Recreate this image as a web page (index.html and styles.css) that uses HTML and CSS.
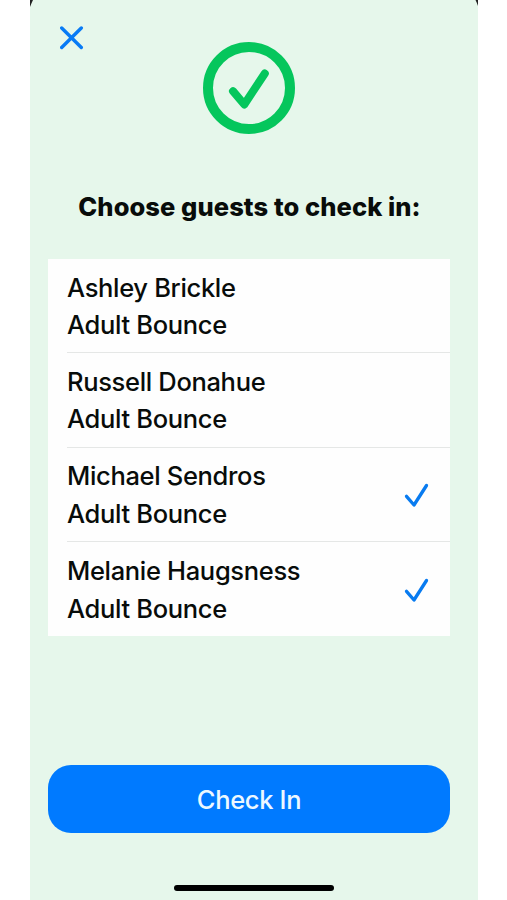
FILE: index.html
```
<!DOCTYPE html>
<html lang="en">
<head>
    <meta charset="UTF-8">
    <meta name="viewport" content="width=device-width, initial-scale=1.0">
    <title>Check In</title>
    <link rel="stylesheet" href="styles.css">
</head>
<body>
    <div class="screen">
        <svg class="corner corner-left" width="4" height="8" viewBox="0 0 4 8"><path d="M0 0H3Q1.500 3 0 7Z"/></svg>
        <svg class="corner corner-right" width="3" height="7" viewBox="0 0 3 7"><path d="M3 0H.5Q2 3 3 6Z"/></svg>

        <button type="button" class="close" aria-label="Close">
            <svg width="24" height="24" viewBox="0 0 24 24"><path d="M1.700 2L21.300 21.500M21.300 2L1.700 21.500"/></svg>
        </button>

        <svg class="status" width="92" height="92" viewBox="0 0 92 92">
            <circle cx="46" cy="46" r="41"/>
            <path d="M30 49.200L41.300 62.500L61.800 31.500"/>
        </svg>

        <h1>Choose guests to check in:</h1>

        <ul class="guests">
            <li>
                <div class="guest">Ashley Brickle<br>Adult Bounce</div>
            </li>
            <li>
                <div class="guest">Russell Donahue<br>Adult Bounce</div>
            </li>
            <li>
                <div class="guest">Michael Sendros<br>Adult Bounce</div>
                <svg class="check" width="26" height="26" viewBox="0 0 26 26"><path d="M2.500 14.300L10 23L22.500 3.500"/></svg>
            </li>
            <li>
                <div class="guest">Melanie Haugsness<br>Adult Bounce</div>
                <svg class="check" width="26" height="26" viewBox="0 0 26 26"><path d="M2.500 14.300L10 23L22.500 3.500"/></svg>
            </li>
        </ul>

        <button type="button" class="check-in">Check In</button>
        <div class="home-bar"></div>
    </div>
</body>
</html>
```
FILE: styles.css
```
body {
    margin: 0;
    background-color: #ffffff;
    color: #080c0a;
    font-family: Inter, "Liberation Sans", sans-serif;
}

.screen {
    position: relative;
    box-sizing: border-box;
    width: 448px;
    height: 900px;
    margin-left: 30px;
    padding: 26px 28px 0 18px;
    overflow: hidden;
    background-color: #e6f7eb;
    display: flex;
    flex-direction: column;
}

svg {
    display: block;
    fill: none;
    stroke-linecap: round;
    stroke-linejoin: round;
}

/* dark bezel showing at the rounded screen corners */
.corner {
    position: absolute;
    top: 0;
    fill: #222;
}

.corner-left {
    left: 0;
}

.corner-right {
    right: 0;
}

.close {
    align-self: flex-start;
    height: 16px;
    margin-left: 12px;
    padding: 0;
    border: none;
    background: none;
    cursor: pointer;
}

.close svg {
    stroke: #087bf5;
    stroke-width: 3.4;
}

.status {
    flex: none;
    align-self: center;
    stroke: #05c65c;
    stroke-width: 10;
}

.status path {
    stroke-width: 8;
}

h1 {
    height: 36px;
    margin: 55px 0 34px;
    padding-left: 1px;
    font-size: 25.5px;
    line-height: 36px;
    font-weight: 800;
    letter-spacing: 0.08px;
    text-align: center;
    white-space: nowrap;
}

.guests {
    margin: 0;
    padding: 0;
    list-style: none;
    background-color: #fefefe;
}

.guests li {
    box-sizing: border-box;
    display: flex;
    align-items: center;
    justify-content: space-between;
    height: 94.5px;
    margin-left: 19px;
    padding: 1px 20px 0 0;
    border-bottom: 1px solid #e5e7e6;
}

.guests li:first-child {
    height: 94px;
}

.guests li:last-child {
    height: 94px;
    border-bottom: none;
}

.guest {
    font-size: 25.5px;
    line-height: 37.5px;
    font-weight: 550;
    letter-spacing: -0.33px;
    white-space: nowrap;
}

.check {
    stroke: #087bf0;
    stroke-width: 3.3;
}

.check-in {
    height: 68px;
    margin-top: 129px;
    padding: 0;
    border: none;
    border-radius: 23px;
    background-color: #007aff;
    color: #ecf8ff;
    font-family: inherit;
    font-size: 25.5px;
    font-weight: 550;
    letter-spacing: -0.33px;
    cursor: pointer;
}

.home-bar {
    width: 160px;
    height: 6px;
    margin: 52px 0 0 126px;
    border-radius: 3px;
    background-color: #000000;
}
```
